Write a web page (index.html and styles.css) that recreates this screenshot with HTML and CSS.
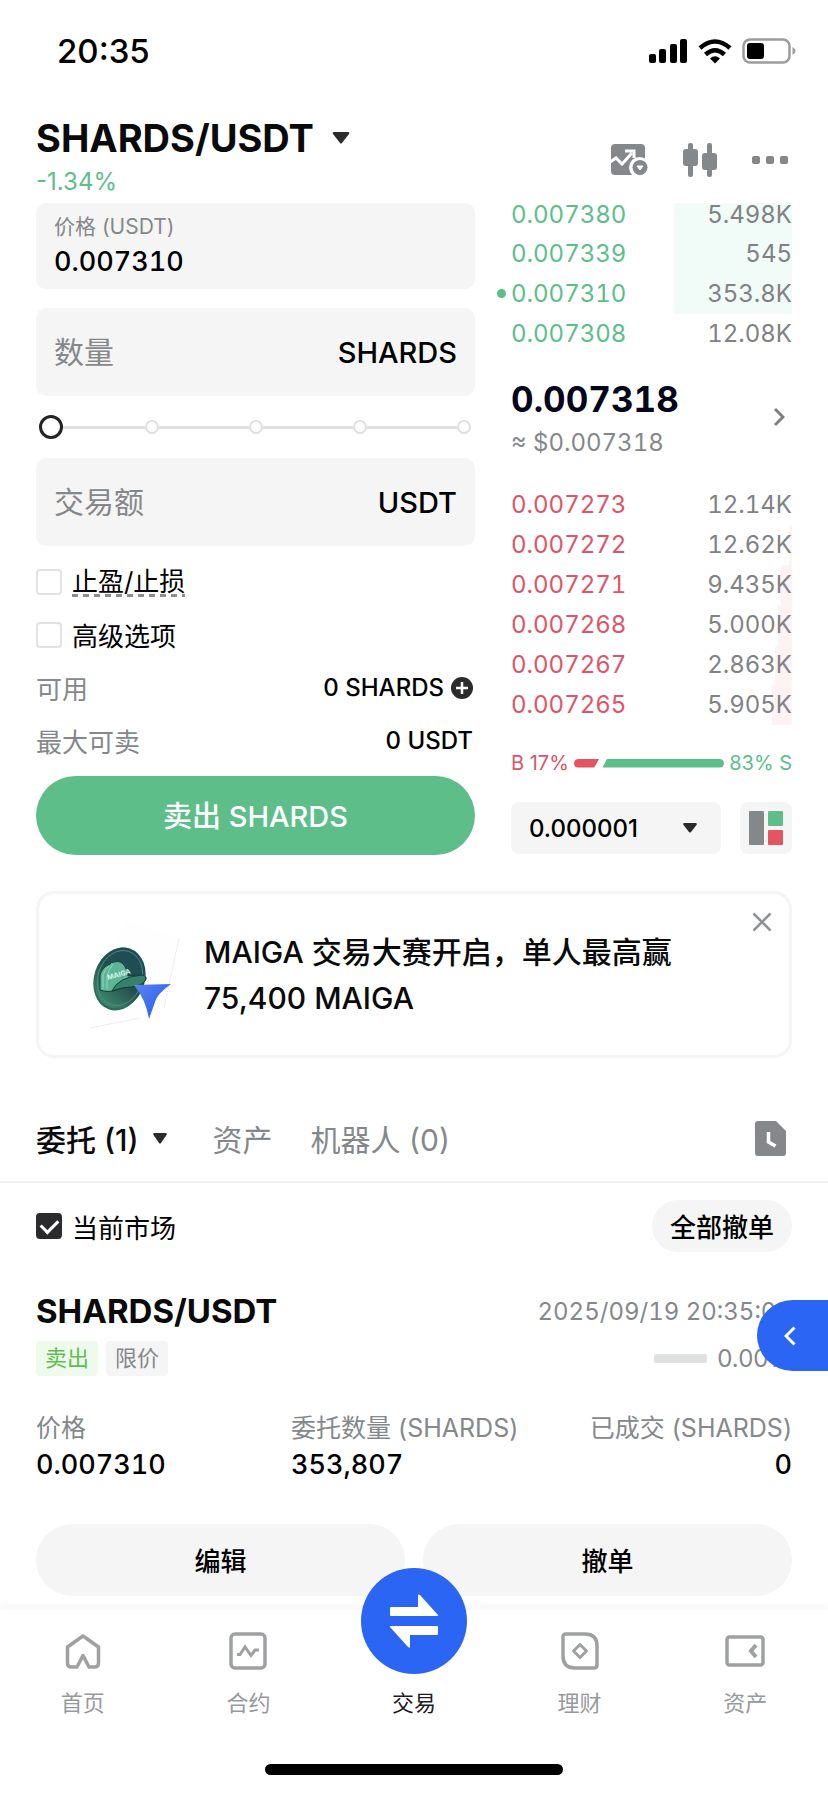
FILE: index.html
```html
<!DOCTYPE html>
<html lang="zh-CN">
<head>
<meta charset="utf-8">
<meta name="viewport" content="width=device-width, initial-scale=1">
<title>SHARDS/USDT</title>
<link rel="stylesheet" href="styles.css">
</head>
<body>
<div class="app">
  <div class="status">
    <span class="status-time">20:35</span>
    <div class="status-icons">
      <svg width="39" height="24" viewBox="0 0 39 24" fill="#000"><rect x="0" y="15" width="7" height="9" rx="2"/><rect x="10" y="10" width="7" height="14" rx="2"/><rect x="21" y="5" width="7" height="19" rx="2"/><rect x="31" y="0" width="7" height="24" rx="2"/></svg>
      <svg width="34" height="25" viewBox="0 0 34 25" fill="none" stroke="#000" stroke-width="4.500"><path d="M2 9Q17-4 32 9"/><path d="M7.500 15.500Q17 7 26.500 15.500"/><path d="M17 24.500l-5-5q5-4.500 10 0z" fill="#000" stroke="none"/></svg>
      <svg width="54" height="26" viewBox="0 0 54 26"><rect x="1.500" y="1.500" width="46" height="23" rx="6.500" fill="none" stroke="#9c9c9c" stroke-width="2.500"/><rect x="5" y="5" width="17" height="16" rx="3" fill="#000"/><path d="M50.500 9q3 1.500 3 4t-3 4z" fill="#9c9c9c"/></svg>
    </div>
  </div>

  <header class="head">
    <div>
      <button class="pair" type="button">SHARDS/USDT
        <svg width="18" height="12" viewBox="0 0 18 12"><path d="M2 0h14q2 0 1 2L10 11q-1 1-2 0L1 2Q0 0 2 0z" fill="#2b2b2d"/></svg>
      </button>
      <div class="change">-1.34%</div>
    </div>
    <div class="tools">
      <button class="icon-btn" type="button" aria-label="图表">
        <svg width="37" height="32" viewBox="0 0 37 32"><rect x="0" y="0" width="34" height="31" rx="4" fill="#85888b"/><path d="M-1 18l6-4 6 6L21 9" fill="none" stroke="#fff" stroke-width="3"/><path d="M14 7h9v7" fill="none" stroke="#fff" stroke-width="3"/><circle cx="28.500" cy="23.500" r="10.500" fill="#fff"/><circle cx="29" cy="23.500" r="7.500" fill="#85888b"/><path d="M26 22h6l-3 4z" fill="#fff" stroke="#fff" stroke-linejoin="round"/></svg>
      </button>
      <button class="icon-btn" type="button" aria-label="K线">
        <svg width="34" height="34" viewBox="0 0 34 34" fill="#85888b"><rect x="5" y="0" width="5" height="34" rx="2"/><rect x="0" y="6" width="15" height="17" rx="3"/><rect x="24" y="0" width="5" height="34" rx="2"/><rect x="19" y="10" width="15" height="17" rx="3"/></svg>
      </button>
      <button class="icon-btn" type="button" aria-label="更多">
        <svg width="36" height="8" viewBox="0 0 36 8" fill="#85888b"><rect width="8" height="8" rx="2"/><rect x="14" width="8" height="8" rx="2"/><rect x="28" width="8" height="8" rx="2"/></svg>
      </button>
    </div>
  </header>

  <main>
    <section class="trade">
      <form class="ticket">
        <div class="field field-price">
          <label for="price">价格 (USDT)</label>
          <input id="price" type="text" value="0.007310">
        </div>
        <div class="field field-row">
          <input id="amount" type="text" placeholder="数量" aria-label="数量">
          <label for="amount">SHARDS</label>
        </div>
        <div class="slider">
          <div class="ticks"><i></i><i></i><i></i><i></i><i></i></div>
          <input class="range" type="range" min="0" max="100" value="0" aria-label="比例">
        </div>
        <div class="field field-row">
          <input id="total" type="text" placeholder="交易额" aria-label="交易额">
          <label for="total">USDT</label>
        </div>
        <div class="options">
          <label class="line"><input class="check" type="checkbox"><span class="dashed">止盈/止损</span></label>
          <label class="line"><input class="check" type="checkbox"><span>高级选项</span></label>
          <div class="line line-info"><span class="muted">可用</span><span class="avail">0 SHARDS
            <button class="icon-btn" type="button" aria-label="充值"><svg width="22" height="22" viewBox="0 0 22 22"><circle cx="11" cy="11" r="11" fill="#2b2b2d"/><path d="M11 5v12M5 11h12" stroke="#fff" stroke-width="2.500"/></svg></button></span></div>
          <div class="line line-info"><span class="muted">最大可卖</span><span class="avail">0 USDT</span></div>
        </div>
        <button class="sell" type="button">卖出 SHARDS</button>
      </form>

      <div class="book">
        <table class="levels levels-up">
          <tr style="--depth:42%"><td>0.007380</td><td>5.498K</td></tr>
          <tr style="--depth:42%"><td>0.007339</td><td>545</td></tr>
          <tr style="--depth:42%"><td><b class="own"></b>0.007310</td><td>353.8K</td></tr>
          <tr style="--depth:0%"><td>0.007308</td><td>12.08K</td></tr>
        </table>
        <button class="last" type="button">
          <span><span class="last-price">0.007318</span><span class="last-fiat">≈ $0.007318</span></span>
          <svg width="12" height="20" viewBox="0 0 12 20" fill="none" stroke="#7d8083" stroke-width="3"><path d="M2 2l8 8-8 8"/></svg>
        </button>
        <table class="levels levels-down">
          <tr style="--depth:0%"><td>0.007273</td><td>12.14K</td></tr>
          <tr style="--depth:1%"><td>0.007272</td><td>12.62K</td></tr>
          <tr style="--depth:4%"><td>0.007271</td><td>9.435K</td></tr>
          <tr style="--depth:5%"><td>0.007268</td><td>5.000K</td></tr>
          <tr style="--depth:6%"><td>0.007267</td><td>2.863K</td></tr>
          <tr style="--depth:7%"><td>0.007265</td><td>5.905K</td></tr>
        </table>
        <div class="ratio">
          <span class="down">B 17%</span>
          <div class="ratio-bar"><div class="ratio-b" style="width:17%"></div><div class="ratio-s"></div></div>
          <span class="up">83% S</span>
        </div>
        <div class="book-controls">
          <div class="step">
            <select aria-label="精度"><option>0.000001</option></select>
            <svg width="14" height="10" viewBox="0 0 14 10"><path d="M1.500 0h11q2 0 1 2L8 9q-1 1-2 0L.5 2Q-.5 0 1.500 0z" fill="#2b2b2d"/></svg>
          </div>
          <button class="layout" type="button" aria-label="布局">
            <svg width="34" height="34" viewBox="0 0 34 34"><rect width="15" height="34" rx="1" fill="#85888b"/><rect x="19" width="15" height="15" rx="1" fill="#5dbe8a"/><rect x="19" y="19" width="15" height="15" rx="1" fill="#e35561"/></svg>
          </button>
        </div>
      </div>
    </section>

    <section class="promo">
      <svg class="promo-art" width="96" height="110" viewBox="0 0 96 110">
        <defs>
          <linearGradient id="coin" x1="0.700" y1="0" x2="0.300" y2="1"><stop offset="0" stop-color="#1f4a5a"/><stop offset=".5" stop-color="#23504d"/><stop offset="1" stop-color="#3f8a6d"/></linearGradient>
          <linearGradient id="arrow" x1="0" y1="0" x2="1" y2="1"><stop offset="0" stop-color="#5a84ee"/><stop offset="1" stop-color="#2459f2"/></linearGradient>
        </defs>
        <path d="M36 0L91 18 76 88 2 108z" fill="#fefefe"/>
        <path d="M91 18L76 88M2 108l50-10" stroke="#eceef3" fill="none"/>
        <ellipse cx="31" cy="59" rx="25" ry="32" transform="rotate(18 31 59)" fill="#2a6a5a"/>
        <ellipse cx="32" cy="58" rx="25" ry="31" transform="rotate(18 32 58)" fill="url(#coin)"/>
        <ellipse cx="32" cy="58" rx="22" ry="28" transform="rotate(18 32 58)" fill="none" stroke="#4a9585" stroke-width=".8"/>
        <path d="M12 70V55Q14 47 22 44q1-2 4-2 9-3 13 9l1 5 14-1q6 1 3 6-4 5-14 6-9 0-14 3-10 3-17 0z" fill="#5cb597" stroke="#173e3a"/>
        <path d="M24 71q6-14 30-16 6 1 3 6-4 5-14 6-9 0-19 4z" fill="#37806a" stroke="#173e3a"/>
        <path d="M15 69V55q2-6 6-9M19 69V57q1-7 6-13" fill="none" stroke="#8fd6bd"/>
        <text x="20" y="60" class="cap-text" transform="rotate(-16 20 60)">MAIGA</text>
        <path d="M46 65L83 64Q69 74 67 82L61 99Q58 80 46 65z" fill="url(#arrow)"/>
      </svg>
      <p class="promo-text">MAIGA 交易大赛开启，单人最高赢<br>75,400 MAIGA</p>
      <button class="icon-btn promo-close" type="button" aria-label="关闭"><svg width="20" height="20" viewBox="0 0 20 20" stroke="#8f9294" stroke-width="2.500"><path d="M1.500 1.500l17 17M18.500 1.500l-17 17"/></svg></button>
    </section>

    <nav class="tabs">
      <button class="tab tab-on" type="button">委托 (1)
        <svg width="14" height="11" viewBox="0 0 14 11"><path d="M1.500 0h11q2 0 1 2L8 10q-1 1-2 0L.5 2Q-.5 0 1.500 0z" fill="#2b2b2d"/></svg></button>
      <button class="tab" type="button">资产</button>
      <button class="tab" type="button">机器人 (0)</button>
      <button class="icon-btn history" type="button" aria-label="历史">
        <svg width="31" height="35" viewBox="0 0 31 35"><path d="M3 0h18l10 10v22q0 3-3 3H3q-3 0-3-3V3q0-3 3-3z" fill="#85888b"/><path d="M13.500 11v10l7 4" fill="none" stroke="#fff" stroke-width="3.500"/></svg>
      </button>
    </nav>

    <section class="orders">
      <div class="filter">
        <label class="line"><input class="check" type="checkbox" checked><span>当前市场</span></label>
        <button class="pill pill-small" type="button">全部撤单</button>
      </div>
      <article>
        <div class="order-head"><h2>SHARDS/USDT</h2><time>2025/09/19 20:35:03</time></div>
        <div class="order-sub">
          <div class="tags"><span class="tag tag-sell">卖出</span><span class="tag">限价</span></div>
          <div class="filled"><span class="filled-bar"></span>0.00%</div>
        </div>
        <dl class="stats">
          <div><dt>价格</dt><dd>0.007310</dd></div>
          <div><dt>委托数量 (SHARDS)</dt><dd>353,807</dd></div>
          <div><dt>已成交 (SHARDS)</dt><dd>0</dd></div>
        </dl>
        <div class="actions">
          <button class="pill" type="button">编辑</button>
          <button class="pill" type="button">撤单</button>
        </div>
      </article>
      <button class="drawer" type="button" aria-label="展开"><svg width="12" height="20" viewBox="0 0 12 20" fill="none" stroke="#fff" stroke-width="3"><path d="M10.500 1.500L2 10l8.500 8.500"/></svg></button>
    </section>
  </main>

  <footer class="dock">
    <nav class="dock-nav">
      <a href="#"><span class="dock-icon"><svg width="38" height="38" viewBox="0 0 38 38" fill="none" stroke="#9fa0a2" stroke-width="3.500" stroke-linejoin="round"><path d="M3.500 15L19 4l15.500 11v16q0 4-4 4H25l-6-11.500L13 35H7.500q-4 0-4-4z"/></svg></span>首页</a>
      <a href="#"><span class="dock-icon"><svg width="38" height="38" viewBox="0 0 38 38" fill="none" stroke="#9fa0a2" stroke-width="3.500"><rect x="2" y="2" width="34" height="34" rx="4"/><path d="M8 22.500h3l5-7.500 6 8.500 4-5.500h4" stroke-width="3"/></svg></span>合约</a>
      <a href="#" class="dock-on"><span class="dock-main"><svg width="50" height="54" viewBox="0 0 50 54" fill="#fff"><path d="M2 13h27V1q0-1 2 0l18 20q1 1-1 1H2q-1 0-1-1v-7q0-1 1-1z"/><path d="M48 41H21v12q0 1-2 0L1 33q-1-1 1-1h46q1 0 1 1v7q0 1-1 1z"/></svg></span>交易</a>
      <a href="#"><span class="dock-icon"><svg width="38" height="38" viewBox="0 0 38 38" fill="none" stroke="#9fa0a2" stroke-width="3.500"><path d="M5 2h19q12 0 12 12v19q0 3-3 3H14Q2 36 2 24V5q0-3 3-3z"/><path d="M19 12.500l6.500 6.500-6.500 6.500-6.500-6.500z" stroke-width="3" stroke-linejoin="round"/></svg></span>理财</a>
      <a href="#"><span class="dock-icon"><svg width="40" height="32" viewBox="0 0 40 32" fill="none" stroke="#9fa0a2" stroke-width="3.500"><rect x="2" y="2" width="36" height="28" rx="2.500"/><path d="M31 10l-5 6 5 6" stroke-width="4"/></svg></span>资产</a>
    </nav>
    <div class="home-bar"></div>
  </footer>
</div>
</body>
</html>
```
FILE: styles.css
```css
* { box-sizing: border-box; }

body {
  margin: 0;
  background: #fff;
  color: #000;
  font-family: Inter, "Noto Sans CJK SC", sans-serif;
  font-size: 24px;
}

button, input, select { font: inherit; color: inherit; }
button { border: 0; padding: 0; background: none; cursor: pointer; }
svg { display: block; flex: none; }

.app { min-height: 100vh; display: flex; flex-direction: column; overflow-x: hidden; }
main { flex: 1; }
.muted { color: #85888b; }
.up { color: #5dbe8a; }
.down { color: #dd5566; }
.icon-btn { display: flex; align-items: center; }

/* Figures line up in columns */
.field-price input,
.levels,
.last,
.order-head time,
.stats dd { font-variant-numeric: tabular-nums; }

/* Status bar */
.status {
  display: flex;
  justify-content: space-between;
  align-items: center;
  padding: 31px 32px 0 57px;
}
.status-time { font-size: 33px; line-height: 40px; font-weight: 500; }
.status-icons { display: flex; align-items: center; gap: 10px; }

/* Pair header */
.head { display: flex; justify-content: space-between; align-items: center; padding: 45px 40px 0 36px; }
.pair {
  display: flex;
  align-items: center;
  gap: 18px;
  font-size: 38px;
  line-height: 44px;
  font-weight: 700;
  color: #0a0a0a;
}
.change { margin-top: 8px; line-height: 28px; color: #5dbe8a; }
.tools { display: flex; align-items: center; gap: 35px; padding-top: 7px; }

/* Trade area */
.trade {
  display: grid;
  grid-template-columns: 439fr 281fr;
  gap: 36px;
  padding: 7px 36px 0;
}
.ticket, .book { min-width: 0; }

.field { background: #f5f5f5; border-radius: 10px; padding: 0 18px; }
.field input { border: 0; outline: 0; padding: 0; background: none; width: 100%; min-width: 0; }
.field-price { padding-top: 9px; padding-bottom: 9px; margin-bottom: 19px; }
.field-price label { display: block; font-size: 21px; line-height: 30px; color: #85888b; }
.field-price input { display: block; font-size: 27px; height: 38px; font-weight: 500; }
.field-row { display: flex; align-items: center; height: 88px; font-size: 29px; font-weight: 500; }
.field-row input { flex: 1; font-size: 30px; height: 44px; font-weight: 400; }
.field-row input::placeholder { color: #85888b; opacity: 1; }

.slider { display: grid; align-items: center; height: 62px; margin: 0 4px 0 3px; }
.ticks, .range { grid-area: 1 / 1; }
.ticks {
  display: flex;
  justify-content: space-between;
  padding: 0 0 0 2px;
  background: linear-gradient(#e0e0e0, #e0e0e0) center / 100% 3px no-repeat;
}
.ticks i { width: 14px; height: 14px; border: 2px solid #e0e0e0; border-radius: 50%; background: #fff; }
.range { appearance: none; width: 100%; height: 24px; margin: 0; background: none; }
.range::-webkit-slider-thumb {
  appearance: none;
  width: 24px;
  height: 24px;
  border: 3px solid #242426;
  border-radius: 50%;
  background: #fff;
}

.options { margin: 9px 0; }
.line { display: flex; align-items: center; gap: 10px; height: 53px; font-size: 26px; }
.line-info { justify-content: space-between; padding-right: 2px; }
.avail { display: flex; align-items: center; gap: 7px; font-size: 24px; font-weight: 500; }
.dashed {
  line-height: 30px;
  background: repeating-linear-gradient(90deg, #8d8d8d 0 6px, transparent 6px 11px) bottom / 100% 3px no-repeat;
}
.check {
  appearance: none;
  display: grid;
  place-items: center;
  width: 26px;
  height: 26px;
  margin: 0;
  border: 2px solid #e2e2e2;
  border-radius: 4px;
  background: #fff;
}
.check:checked { border-color: #2b2b2d; background: #2b2b2d; }
.check:checked::after {
  content: "";
  width: 8px;
  height: 14px;
  margin-bottom: 4px;
  border: solid #fff;
  border-width: 0 3px 3px 0;
  transform: rotate(45deg);
}
.sell {
  display: block;
  width: 100%;
  height: 79px;
  padding-bottom: 4px;
  border-radius: 40px;
  background: #5dbe8a;
  color: #fff;
  font-size: 29px;
  font-weight: 500;
}

/* Order book */
.levels { width: 100%; border-collapse: collapse; color: #808285; }
.levels tr { height: 40px; background: linear-gradient(var(--tint), var(--tint)) right / var(--depth) 100% no-repeat; }
.levels td { position: relative; padding: 0; line-height: 40px; }
.levels td:last-child { text-align: right; }
.levels-up { --tint: #f1fbf7; }
.levels-up tr:first-child { height: 31px; vertical-align: top; }
.levels-up tr:first-child td { line-height: 24px; }
.levels-down { --tint: #fdf3f4; }
.levels-up td:first-child { color: #5dbe8a; }
.levels-down td:first-child { color: #dd5566; }
.own { position: absolute; left: -14px; top: 15px; width: 9px; height: 9px; border-radius: 50%; background: #5dbe8a; }

.last {
  display: flex;
  align-items: center;
  justify-content: space-between;
  width: 100%;
  padding: 23px 7px 28px 0;
  text-align: left;
}
.last-price { display: block; font-size: 35px; line-height: 44px; font-weight: 700; color: #06061a; }
.last-fiat { display: block; margin-top: 8px; line-height: 28px; color: #85888b; }

.ratio { display: flex; align-items: center; gap: 5px; margin-top: 26px; font-size: 20px; line-height: 24px; }
.ratio-bar { flex: 1; display: flex; height: 9px; }
.ratio-b { background: #e35561; border-radius: 5px 0 0 5px; clip-path: polygon(0 0, 100% 0, 80% 100%, 0 100%); }
.ratio-s { flex: 1; margin-left: 1px; background: #5dbe8a; border-radius: 0 5px 5px 0; clip-path: polygon(7px 0, 100% 0, 100% 100%, 2px 100%); }

.book-controls { display: flex; gap: 19px; margin-top: 27px; }
.step { flex: 1; display: grid; align-items: center; min-width: 0; }
.step select, .step svg { grid-area: 1 / 1; }
.step select {
  appearance: none;
  width: 100%;
  height: 52px;
  padding: 0 18px;
  border: 0;
  border-radius: 8px;
  background: #f5f5f5;
  font-weight: 500;
}
.step svg { justify-self: end; margin-right: 24px; pointer-events: none; }
.layout { display: grid; place-items: center; width: 52px; height: 52px; border-radius: 8px; background: #f5f5f5; }

/* Promo card */
.promo {
  position: relative;
  display: flex;
  align-items: center;
  gap: 20px;
  margin: 36px 36px 0;
  padding: 26px 60px 25px 49px;
  border: 3px solid #f5f5f5;
  border-radius: 18px;
}
.promo-text { margin: 0; font-size: 30px; line-height: 46px; font-weight: 500; color: #0a0a0a; }
.promo-close { position: absolute; top: 18px; right: 17px; }
.cap-text { font-size: 7px; font-weight: 700; fill: #d5f3e6; }

/* Tabs */
.tabs {
  display: flex;
  align-items: center;
  gap: 38px;
  height: 88px;
  margin-top: 37px;
  padding: 0 42px 0 36px;
  border-bottom: 2px solid #f0f0f0;
}
.tab { display: flex; align-items: center; gap: 14px; font-size: 30px; color: #85888b; }
.tab-on { margin-right: 8px; color: #0a0a0a; font-weight: 500; }
.history { margin-left: auto; }

/* Orders */
.orders { position: relative; padding: 17px 36px 14px; }
.filter { display: flex; justify-content: space-between; align-items: center; }
.filter .line { height: 52px; }
.pill { flex: 1; height: 72px; padding-bottom: 2px; border-radius: 36px; background: #f5f5f5; font-size: 26px; font-weight: 500; }
.pill-small { flex: none; height: 52px; padding: 0 18px 2px; }
.order-head { display: flex; justify-content: space-between; align-items: center; margin-top: 39px; color: #85888b; }
.order-head h2 { margin: 0; font-size: 33px; line-height: 40px; font-weight: 700; color: #0a0a0a; }
.order-sub { display: flex; justify-content: space-between; align-items: center; margin-top: 10px; color: #85888b; }
.tags { display: flex; gap: 8px; }
.tag { padding: 0 9px; font-size: 22px; line-height: 35px; border-radius: 4px; background: #f5f5f6; }
.tag-sell { background: #eefaec; color: #62bd55; }
.filled { display: flex; align-items: center; gap: 10px; }
.filled-bar { width: 53px; height: 9px; border-radius: 2px; background: #e0e1e1; }
.stats { display: grid; grid-template-columns: 255fr 260fr 241fr; margin: 36px 0 0; }
.stats dt { font-size: 25px; line-height: 32px; color: #85888b; white-space: nowrap; }
.stats dd { margin: 3px 0 0; font-size: 27px; line-height: 36px; font-weight: 500; }
.stats div:last-child { justify-self: end; text-align: right; }
.actions { display: flex; gap: 18px; margin-top: 41px; }
.drawer {
  position: absolute;
  top: 117px;
  right: 0;
  display: flex;
  align-items: center;
  width: 71px;
  height: 71px;
  padding-left: 27px;
  border-radius: 36px 0 0 36px;
  background: #2b65f3;
}

/* Bottom dock */
.dock { position: relative; background: #fff; box-shadow: 0 -5px 6px #f8f8f8; padding-bottom: 18px; }
.dock-nav { display: grid; grid-template-columns: repeat(5, 1fr); grid-template-rows: 107px; align-items: end; }
.dock-nav a {
  display: flex;
  flex-direction: column;
  align-items: center;
  font-size: 22px;
  line-height: 28px;
  color: #97999c;
  text-decoration: none;
}
.dock-nav .dock-on { color: #1c1c1e; }
.dock-icon { display: grid; place-items: center; height: 38px; margin-bottom: 19px; }
.dock-main {
  display: grid;
  place-items: center;
  width: 106px;
  height: 106px;
  margin-bottom: 15px;
  border-radius: 50%;
  background: #2b65f3;
}
.home-bar { width: 36%; height: 11px; margin: 47px auto 0; border-radius: 6px; background: #000; }
```
